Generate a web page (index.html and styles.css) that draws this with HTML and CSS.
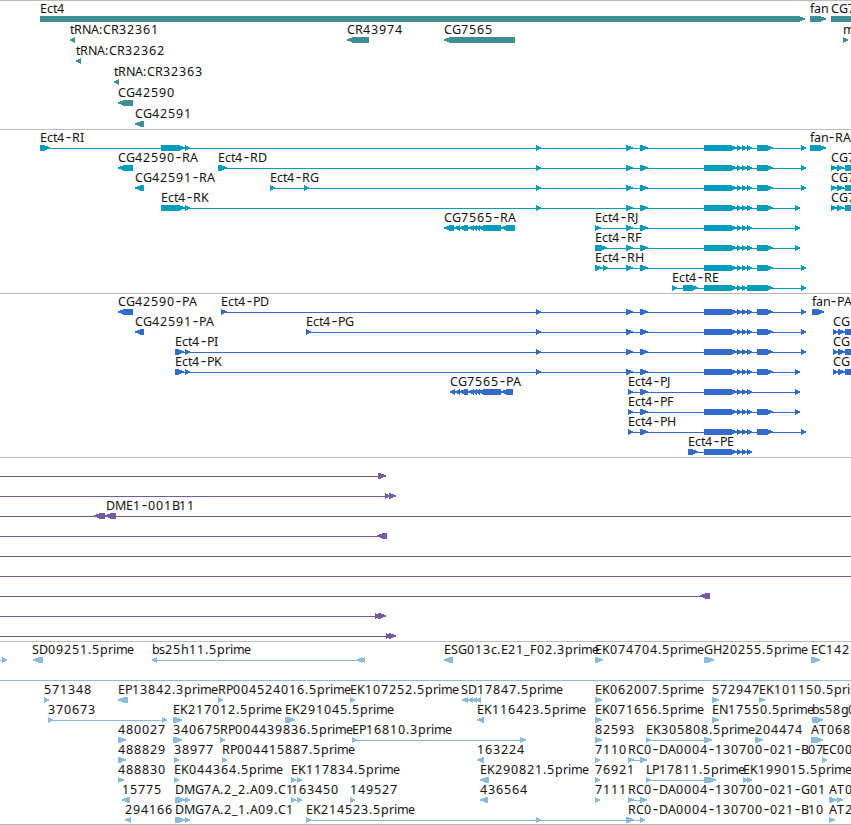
FILE: index.html
```
<!DOCTYPE html>
<html>
<head>
    <meta charset="utf-8">
    <title>Ect4 region</title>
    <link rel="stylesheet" href="styles.css">
</head>

<body>
    <div class="browser">
        <svg class="track gene" id="gene"></svg>
        <svg class="track transcript" id="transcript"></svg>
        <svg class="track protein" id="protein"></svg>
        <svg class="track clone" id="clone"></svg>
        <svg class="track est" id="est"></svg>
    </div>
    <script src="tracks.js"></script>
</body>
</html>
```

FILE: styles.css
```
body {
    margin: 0;
    background-color: #fff;
    overflow: hidden;
}

.browser {
    display: flex;
    flex-direction: column;
    border-bottom: 1px solid #bbb;
}

.track {
    display: block;
    box-sizing: border-box;
    width: 100%;
    border-top: 1px solid #bbb;
    overflow: hidden;
    flex: none;
}

.track text {
    font-family: "Noto Sans", sans-serif;
    font-size: 12.5px;
    fill: #111;
}

.track .dash {
    font-family: "Liberation Mono", monospace;
    font-size: 15px;
}

.track polygon,
.track rect {
    shape-rendering: crispEdges;
}

.gene {
    height: 129px;
    fill: #3f8e94;
}

.transcript {
    height: 164px;
    fill: #009dbf;
}

.protein {
    height: 164px;
    fill: #316ccc;
}

.clone {
    height: 184px;
    fill: #765aa8;
}

.est {
    height: 183px;
    fill: #89bcdc;
}
```

FILE: tracks.js
```
var NS = "http://www.w3.org/2000/svg";

// pixel advance of each character, digits are 8
var ADVANCE = {
    A: 8, B: 7, C: 8, D: 9, E: 7, F: 7, G: 9, H: 9, I: 3, J: 4, K: 8, L: 6, M: 11,
    N: 9, P: 7, R: 8, S: 7, a: 7, b: 7, c: 6, e: 7, f: 4, g: 7, h: 8, i: 3, m: 11,
    n: 7, p: 8, r: 5, s: 6, t: 4, ".": 4, ":": 4, "-": 7, "_": 6
};

// exons at the 3' end that most Ect4 isoforms share
var mid = "626-633 640-648 ";
var core = "704-737 737-742 742-747 747-752 ";
var tail = mid + core + "757-773 ";
var full = "536-541 " + tail;
var cg = "831-837 837-844 845-870";
var cgp = "833-838 838-845 845-870";

// feature: [row, label, label x, direction, exons]
var tracks = {
    gene: { pitch: 21, features: [
        [0, "Ect4", 40, ">", "40-805"],
        [0, "fan", 810, ">", "810-826"],
        [0, "CG7", 831, ">", "831-870"],
        [1, "tRNA:CR32361", 70, "<", "70-75"],
        [1, "CR43974", 347, "<", "347-369"],
        [1, "CG7565", 444, "<", "444-515"],
        [1, "m", 843, ">", "843-848"],
        [2, "tRNA:CR32362", 76, "<", "76-81"],
        [3, "tRNA:CR32363", 114, "<", "114-119"],
        [4, "CG42590", 118, "<", "118-133"],
        [5, "CG42591", 135, "<", "135-144"]
    ] },
    transcript: { pitch: 20, features: [
        [0, "Ect4-RI", 40, ">", "40-50 161-185 185-190 " + full + "801-806"],
        [0, "fan-RA", 810, ">", "810-826"],
        [1, "CG42590-RA", 118, "<", "118-133"],
        [1, "Ect4-RD", 218, ">", "218-227 " + full + "801-806"],
        [1, "CG7", 831, ">", cg],
        [2, "CG42591-RA", 135, "<", "135-144"],
        [2, "Ect4-RG", 270, ">", "270-275 304-309 " + full + "801-806"],
        [2, "CG7", 831, ">", cg],
        [3, "Ect4-RK", 161, ">", "161-185 185-190 " + full + "795-800"],
        [3, "CG7", 831, ">", cg],
        [4, "CG7565-RA", 444, "<", "444-454 454-460 459-468 468-474 473-477 476-480 478-501 501-515"],
        [4, "Ect4-RJ", 595, ">", "595-601 " + mid + core + "795-800"],
        [5, "Ect4-RF", 595, ">", "595-607 " + tail + "795-800"],
        [6, "Ect4-RH", 595, ">", "595-602 603-608 " + tail + "801-806"],
        [7, "Ect4-RE", 672, ">", "672-677 683-698 704-737 737-742 742-747 747-773 801-806"]
    ] },
    protein: { pitch: 20, features: [
        [0, "CG42590-PA", 118, "<", "118-133"],
        [0, "Ect4-PD", 221, ">", "221-227 " + full + "801-806"],
        [0, "fan-PA", 812, ">", "812-824"],
        [1, "CG42591-PA", 135, "<", "135-144"],
        [1, "Ect4-PG", 306, ">", "306-311 " + full + "801-806"],
        [1, "CG", 833, ">", cgp],
        [2, "Ect4-PI", 175, ">", "175-184 185-190 " + full + "801-806"],
        [2, "CG", 833, ">", cgp],
        [3, "Ect4-PK", 175, ">", "175-184 185-190 " + full + "795-800"],
        [3, "CG", 833, ">", cgp],
        [4, "CG7565-PA", 450, "<", "450-455 455-460 459-468 468-474 473-477 476-480 478-501 501-513"],
        [4, "Ect4-PJ", 628, ">", "628-633 640-648 " + core + "795-800"],
        [5, "Ect4-PF", 628, ">", "628-633 640-648 " + core + "757-773 795-800"],
        [6, "Ect4-PH", 628, ">", "628-633 640-648 " + core + "757-773 801-806"],
        [7, "Ect4-PE", 688, ">", "688-698 " + core]
    ] },
    clone: { pitch: 20, features: [
        [0, "", 0, ">", "-20--10 378-386"],
        [1, "", 0, ">", "-20--10 385-390 389-396"],
        [2, "DME1-001B11", 106, "<", "-20--10 94-105 105-116 870-880"],
        [3, "", 0, "<", "-20--10 377-387"],
        [4, "", 0, ">", "-20--10 870-880"],
        [5, "", 0, ">", "-20--10 870-880"],
        [6, "", 0, "<", "-20--10 700-710"],
        [7, "", 0, ">", "-20--10 375-381 378-386"],
        [8, "", 0, ">", "-20--10 386-391 389-396"]
    ] },
    est: { pitch: 20, features: [
        [0, "", 0, ">", "-20--10 2-7"],
        [0, "SD09251.5prime", 32, "<", "33-43"],
        [0, "bs25h11.5prime", 152, "<", "152-157 357-362 360-365"],
        [0, "ESG013c.E21_F02.3prime", 444, "<", "444-453"],
        [0, "EK074704.5prime", 595, ">", "595-603"],
        [0, "GH20255.5prime", 704, ">", "704-714"],
        [0, "EC142", 811, ">", "811-820"],
        [1, "", 0, ">", "-20--10 870-880"],
        [2, "571348", 44, ">", "44-49"],
        [2, "EP13842.3prime", 118, "<", "118-128"],
        [2, "RP004524016.5prime", 218, ">", "218-223"],
        [2, "EK107252.5prime", 350, ">", "350-355"],
        [2, "SD17847.5prime", 461, "<", "462-468 468-473 472-477 476-481"],
        [2, "EK062007.5prime", 595, ">", "595-602"],
        [2, "572947", 712, ">", "712-719"],
        [2, "EK101150.5prime", 759, ">", "759-765"],
        [3, "370673", 48, ">", "48-53 162-167"],
        [3, "EK217012.5prime", 173, ">", "173-182"],
        [3, "EK291045.5prime", 285, ">", "285-295"],
        [3, "EK116423.5prime", 477, "<", "477-484"],
        [3, "EK071656.5prime", 595, ">", "595-602"],
        [3, "EN17550.5prime", 712, ">", "712-719"],
        [3, "bs58g0", 812, ">", "812-823"],
        [4, "480027", 118, ">", "118-126"],
        [4, "340675", 173, ">", "173-182"],
        [4, "RP004439836.5prime", 220, ">", "220-225"],
        [4, "EP16810.3prime", 352, ">", "352-357 520-526"],
        [4, "82593", 595, ">", "595-602"],
        [4, "EK305808.5prime", 646, ">", "646-651 704-712"],
        [4, "204474", 755, ">", "755-763"],
        [4, "AT068", 811, ">", "811-823"],
        [5, "488829", 118, ">", "118-126"],
        [5, "38977", 174, ">", "174-179"],
        [5, "RP004415887.5prime", 222, ">", "222-227"],
        [5, "163224", 477, "<", "477-484"],
        [5, "7110", 595, ">", "595-600"],
        [5, "RC0-DA0004-130700-021-B07", 628, ">", "628-634 640-647"],
        [5, "EC00", 822, ">", "822-827"],
        [6, "488830", 118, ">", "118-124"],
        [6, "EK044364.5prime", 174, ">", "174-179"],
        [6, "EK117834.5prime", 291, ">", "291-296 297-302"],
        [6, "EK290821.5prime", 480, "<", "480-489"],
        [6, "76921", 595, ">", "595-600"],
        [6, "LP17811.5prime", 646, ">", "646-651 704-716"],
        [6, "EK199015.5prime", 743, ">", "743-748 747-752"],
        [7, "15775", 122, "<", "122-130"],
        [7, "DMG7A.2_2.A09.C1", 175, ">", "175-185 185-190"],
        [7, "163450", 291, ">", "291-296 297-302"],
        [7, "149527", 350, ">", "350-355"],
        [7, "436564", 480, "<", "480-488"],
        [7, "7111", 595, ">", "595-600"],
        [7, "RC0-DA0004-130700-021-G01", 628, ">", "628-634 640-647"],
        [7, "AT0", 829, ">", "829-837 837-843"],
        [8, "294166", 125, "<", "125-131"],
        [8, "DMG7A.2_1.A09.C1", 175, ">", "175-185 185-190"],
        [8, "EK214523.5prime", 306, ">", "306-311 536-541 626-634 640-645"],
        [8, "RC0-DA0004-130700-021-B10", 628, ">", ""],
        [8, "AT2", 829, ">", "829-835"]
    ] }
};

function add(parent, name, attrs) {
    var el = document.createElementNS(NS, name);
    for (var key in attrs) {
        el.setAttribute(key, attrs[key]);
    }
    parent.appendChild(el);
    return el;
}

function drawLabel(svg, label, x, y) {
    var text = add(svg, "text", { y: y });
    // hyphens are set wider than the font's own
    label.split(/(-)/).forEach(function (part) {
        var xs = [];
        for (var i = 0; i < part.length; i++) {
            xs.push(part == "-" ? x - 1 : x);
            x += ADVANCE[part[i]] || 8;
        }
        var span = add(text, "tspan", { x: xs.join(" ") });
        if (part == "-") {
            span.setAttribute("class", "dash");
        }
        span.textContent = part;
    });
}

// box with a pointed end, 6px high
function drawExon(svg, a, b, y, dir) {
    var head = Math.min(b - a, 6);
    var from = dir == ">" ? a : b;
    var to = dir == ">" ? b : a;
    var neck = dir == ">" ? b - head : a + head;
    add(svg, "polygon", {
        points: [from, y, neck, y, to, y + 2.4, to, y + 3.4, neck, y + 6, from, y + 6].join(" ")
    });
}

for (var id in tracks) {
    var svg = document.getElementById(id);
    tracks[id].features.forEach(function (f) {
        // the border takes the first pixel of the track
        var y = f[0] * tracks[id].pitch + 15;
        var exons = [];
        f[4].replace(/(-?\d+)-(-?\d+)/g, function (m, a, b) {
            exons.push([+a, +b]);
        });
        if (exons.length > 1) {
            var start = exons[0][0];
            var end = exons[exons.length - 1][1];
            add(svg, "rect", { x: start, y: y + 3, width: end - start, height: 1 });
        }
        exons.forEach(function (e) {
            drawExon(svg, e[0], e[1], y, f[3]);
        });
        if (f[1]) {
            drawLabel(svg, f[1], f[2], y - 3);
        }
    });
}
```
